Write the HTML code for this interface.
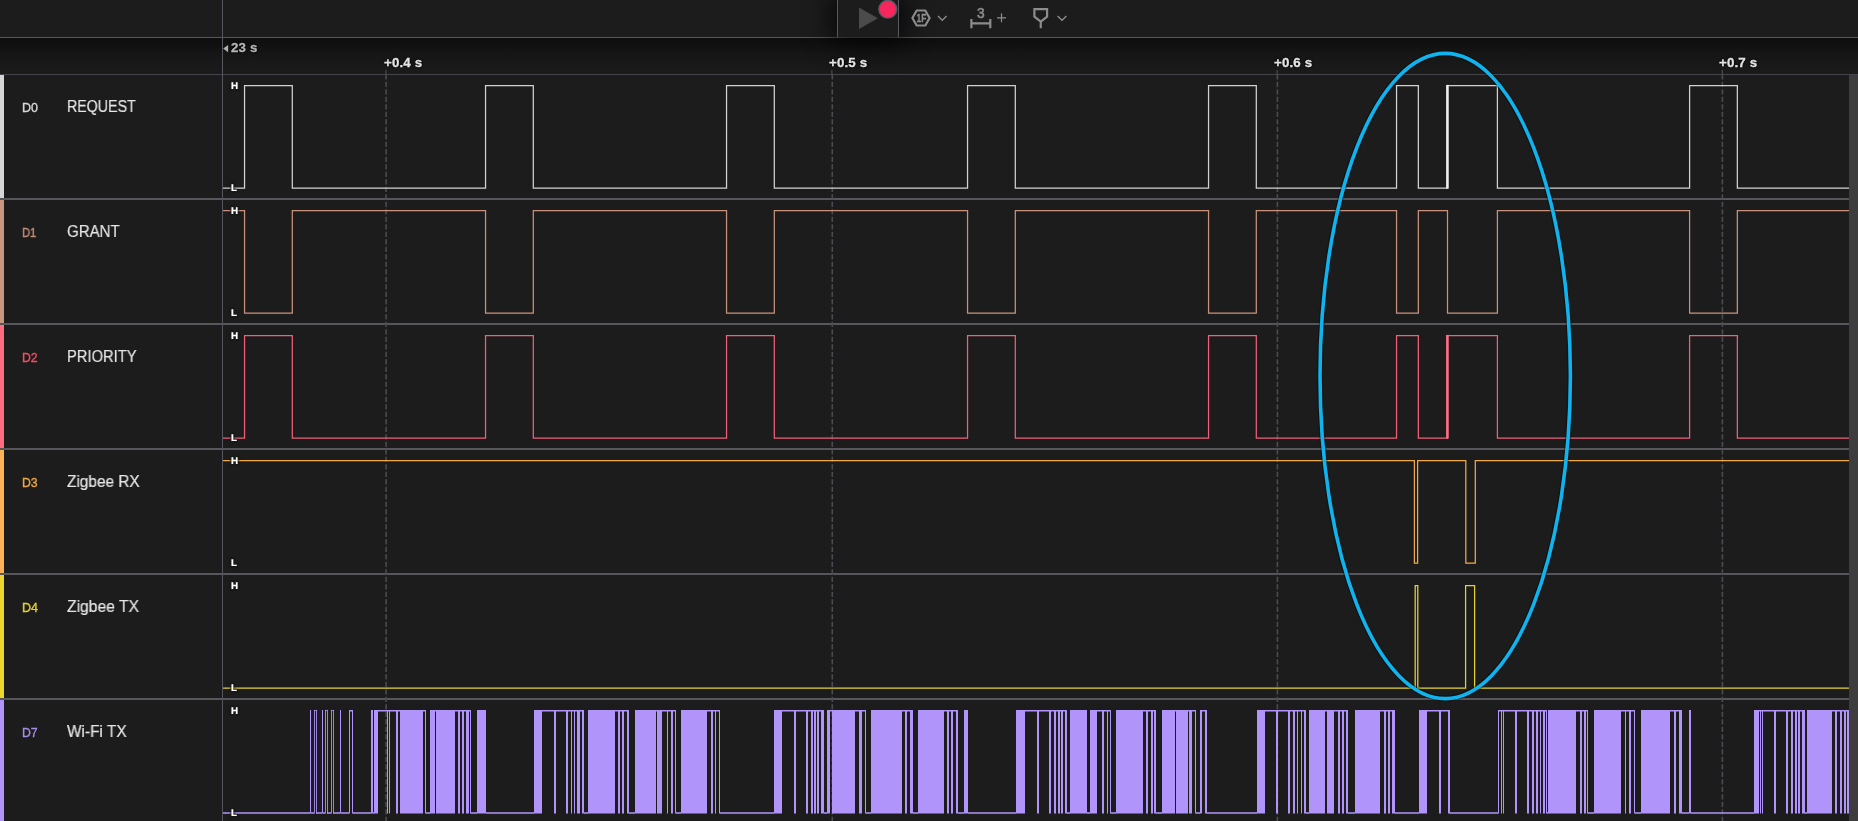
<!DOCTYPE html>
<html lang="en"><head><meta charset="utf-8"><title>Logic capture</title>
<style>
html,body{margin:0;padding:0;background:#1c1c1c;}
body{width:1858px;height:821px;overflow:hidden;position:relative;font-family:"Liberation Sans",sans-serif;}
.abs{position:absolute;}
#topbar{left:0;top:0;width:1858px;height:37px;background:#1c1c1c;border-bottom:1px solid #56565f;}
#ruler{left:0;top:38px;width:1858px;height:36px;background:linear-gradient(#0d0d0d,#161616 45%,#1b1b1b);border-bottom:1px solid #44444c;}
#toolbox{left:837px;top:0;width:60px;height:37px;background:#1c1c1c;border-left:1px solid #58585f;border-right:1px solid #58585f;box-shadow:0 0 26px 6px rgba(0,0,0,.75);}
#vsep{left:222px;top:0;width:1px;height:821px;background:#56565e;}
#scroll{left:1849px;top:75px;width:9px;height:746px;background:#3d3d3d;}
.sep{left:0;width:1849px;height:2px;background:#56565c;}
.bar{left:0;width:4px;}
.chan{left:21.7px;font-size:12.25px;line-height:14px;white-space:nowrap;will-change:transform;transform-origin:0 50%;-webkit-text-stroke:0.35px currentColor;}
.name{left:67px;font-size:16.3px;line-height:20px;color:#e6e6e6;-webkit-text-stroke:0.2px #e6e6e6;will-change:transform;white-space:nowrap;transform-origin:0 50%;}
.hl{will-change:transform;font-weight:bold;font-size:9.8px;line-height:10px;text-rendering:geometricPrecision;color:#fff;left:231px;-webkit-text-stroke:0.2px #fff;text-shadow:0 0 2px #1c1c1c,0 0 2px #1c1c1c,0 0 3px #1c1c1c,0 0 3px #1c1c1c;}
.tick{will-change:transform;font-weight:bold;font-size:13.3px;line-height:14px;color:#e4e4e4;white-space:nowrap;letter-spacing:0.15px;-webkit-text-stroke:0.3px currentColor;text-shadow:0 0 2px #000,0 0 3px #000;}
svg{position:absolute;left:0;top:0;overflow:visible;}
</style></head><body>
<div class="abs" id="topbar"></div>
<div class="abs" id="ruler"></div>
<div class="abs" id="toolbox"></div>

<div class="abs bar" style="top:75px;height:123px;background:#d6d6d6"></div>
<div class="abs sep" style="top:198px"></div>
<div class="abs chan" style="top:101px;color:#d8d8d8;transform:scaleX(1.02)">D0</div>
<div class="abs name" style="top:96px;left:67.4px;transform:scaleX(0.873)">REQUEST</div>
<div class="abs bar" style="top:200px;height:123px;background:#c9967e"></div>
<div class="abs sep" style="top:323px"></div>
<div class="abs chan" style="top:226px;color:#c48e74;transform:scaleX(0.92)">D1</div>
<div class="abs name" style="top:221px;left:67.4px;transform:scaleX(0.925)">GRANT</div>
<div class="abs bar" style="top:325px;height:123px;background:#ff6b7f"></div>
<div class="abs sep" style="top:448px"></div>
<div class="abs chan" style="top:351px;color:#f2505f;transform:scaleX(0.98)">D2</div>
<div class="abs name" style="top:346px;left:67.4px;transform:scaleX(0.905)">PRIORITY</div>
<div class="abs bar" style="top:450px;height:123px;background:#ffb257"></div>
<div class="abs sep" style="top:573px"></div>
<div class="abs chan" style="top:476px;color:#eda646;transform:scaleX(1.0)">D3</div>
<div class="abs name" style="top:471px;left:67px;transform:scaleX(0.945)">Zigbee RX</div>
<div class="abs bar" style="top:575px;height:123px;background:#ecd730"></div>
<div class="abs sep" style="top:698px"></div>
<div class="abs chan" style="top:601px;color:#e4cf2e;transform:scaleX(1.02)">D4</div>
<div class="abs name" style="top:596px;left:67px;transform:scaleX(0.962)">Zigbee TX</div>
<div class="abs bar" style="top:700px;height:121px;background:#b094fa"></div>
<div class="abs chan" style="top:726px;color:#a68be6;transform:scaleX(0.99)">D7</div>
<div class="abs name" style="top:721px;left:67px;transform:scaleX(0.945)">Wi-Fi TX</div>
<div class="abs" id="vsep"></div>
<div class="abs" id="scroll"></div>
<svg width="1858" height="821" viewBox="0 0 1858 821">
<path d="M386 70V75" stroke="#50505a" stroke-width="1.1" fill="none"/>
<path d="M386.1 74.3V821" stroke="#4a4a52" stroke-width="1.6" stroke-dasharray="5.2 2.3" fill="none"/>
<path d="M831.9 70V75" stroke="#50505a" stroke-width="1.1" fill="none"/>
<path d="M832.3 74.3V821" stroke="#4a4a52" stroke-width="1.6" stroke-dasharray="5.2 2.3" fill="none"/>
<path d="M1277.1 70V75" stroke="#50505a" stroke-width="1.1" fill="none"/>
<path d="M1277.4 74.3V821" stroke="#4a4a52" stroke-width="1.6" stroke-dasharray="5.2 2.3" fill="none"/>
<path d="M1722.3 70V75" stroke="#50505a" stroke-width="1.1" fill="none"/>
<path d="M1722.4 74.3V821" stroke="#4a4a52" stroke-width="1.6" stroke-dasharray="5.2 2.3" fill="none"/>
<path d="M223 188H244.55V85.5H292.3V188H485.55V85.5H533.3V188H726.55V85.5H774.3V188H967.55V85.5H1015.3V188H1208.55V85.5H1256.3V188H1396.55V85.5H1418.35V188H1447.5V85.5H1497.4V188H1689.6V85.5H1737.35V188H1849" fill="none" stroke="#d2d2d2" stroke-width="1.25" stroke-linejoin="miter"/>
<path d="M223 210.5H244.55V313H292.3V210.5H485.55V313H533.3V210.5H726.55V313H774.3V210.5H967.55V313H1015.3V210.5H1208.55V313H1256.3V210.5H1396.55V313H1418.35V210.5H1447.5V313H1497.4V210.5H1689.6V313H1737.35V210.5H1849" fill="none" stroke="#c9927a" stroke-width="1.25" stroke-linejoin="miter"/>
<path d="M223 438H244.55V335.5H292.3V438H485.55V335.5H533.3V438H726.55V335.5H774.3V438H967.55V335.5H1015.3V438H1208.55V335.5H1256.3V438H1396.55V335.5H1418.35V438H1447.5V335.5H1497.4V438H1689.6V335.5H1737.35V438H1849" fill="none" stroke="#f0607a" stroke-width="1.25" stroke-linejoin="miter"/>
<path d="M223 460.5H1414.4V563H1417.6V460.5H1465.8V563H1475.3V460.5H1849" fill="none" stroke="#f0a848" stroke-width="1.25" stroke-linejoin="miter"/>
<path d="M223 688H1415.2V585.5H1417.8V688H1465.6V585.5H1474.6V688H1849" fill="none" stroke="#e6d232" stroke-width="1.25" stroke-linejoin="miter"/>
<path d="M1447.4 84.9V188.6" stroke="#ededed" stroke-width="2.6" fill="none"/>
<path d="M1447.4 334.9V438.6" stroke="#ff6f86" stroke-width="2.6" fill="none"/>
<path d="M310 709.9H311V813.6H310ZM322 709.9H323V813.6H322ZM340 709.9H341V813.6H340ZM349 709.9H350V813.6H349ZM352 709.9H353V813.6H352ZM371 709.9H373V813.6H371ZM374 709.9H378V813.6H374ZM387 709.9H388V813.6H387ZM389 709.9H390V813.6H389ZM396 709.9H398V813.6H396ZM400 709.9H423V813.6H400ZM425 709.9H426V813.6H425ZM430 709.9H435V813.6H430ZM436 709.9H455V813.6H436ZM458 709.9H460V813.6H458ZM462 709.9H464V813.6H462ZM466 709.9H469V813.6H466ZM470 709.9H471V813.6H470ZM477 709.9H486V813.6H477ZM534 709.9H542V813.6H534ZM554 709.9H556V813.6H554ZM566 709.9H568V813.6H566ZM571 709.9H572V813.6H571ZM574 709.9H575V813.6H574ZM577 709.9H580V813.6H577ZM582 709.9H584V813.6H582ZM588 709.9H615V813.6H588ZM618 709.9H620V813.6H618ZM622 709.9H624V813.6H622ZM627 709.9H629V813.6H627ZM635 709.9H656V813.6H635ZM657 709.9H662V813.6H657ZM667 709.9H668V813.6H667ZM671 709.9H673V813.6H671ZM675 709.9H676V813.6H675ZM681 709.9H707V813.6H681ZM711 709.9H713V813.6H711ZM715 709.9H716V813.6H715ZM719 709.9H720V813.6H719ZM774 709.9H782V813.6H774ZM794 709.9H796V813.6H794ZM806 709.9H808V813.6H806ZM811 709.9H813V813.6H811ZM814 709.9H816V813.6H814ZM817 709.9H819V813.6H817ZM821 709.9H824V813.6H821ZM827 709.9H830V813.6H827ZM832 709.9H855V813.6H832ZM859 709.9H862V813.6H859ZM865 709.9H866V813.6H865ZM871 709.9H902V813.6H871ZM905 709.9H907V813.6H905ZM910 709.9H913V813.6H910ZM918 709.9H944V813.6H918ZM947 709.9H949V813.6H947ZM951 709.9H953V813.6H951ZM956 709.9H958V813.6H956ZM964 709.9H968V813.6H964ZM1016 709.9H1025V813.6H1016ZM1037 709.9H1039V813.6H1037ZM1049 709.9H1051V813.6H1049ZM1054 709.9H1056V813.6H1054ZM1058 709.9H1060V813.6H1058ZM1061 709.9H1063V813.6H1061ZM1065 709.9H1067V813.6H1065ZM1070 709.9H1087V813.6H1070ZM1090 709.9H1097V813.6H1090ZM1102 709.9H1104V813.6H1102ZM1107 709.9H1108V813.6H1107ZM1110 709.9H1111V813.6H1110ZM1116 709.9H1143V813.6H1116ZM1146 709.9H1148V813.6H1146ZM1151 709.9H1153V813.6H1151ZM1154 709.9H1156V813.6H1154ZM1162 709.9H1175V813.6H1162ZM1176 709.9H1188V813.6H1176ZM1189 709.9H1192V813.6H1189ZM1195 709.9H1196V813.6H1195ZM1200 709.9H1202V813.6H1200ZM1205 709.9H1207V813.6H1205ZM1257 709.9H1265V813.6H1257ZM1276 709.9H1278V813.6H1276ZM1288 709.9H1290V813.6H1288ZM1293 709.9H1295V813.6H1293ZM1297 709.9H1298V813.6H1297ZM1301 709.9H1302V813.6H1301ZM1304 709.9H1306V813.6H1304ZM1309 709.9H1325V813.6H1309ZM1327 709.9H1334V813.6H1327ZM1338 709.9H1340V813.6H1338ZM1342 709.9H1344V813.6H1342ZM1346 709.9H1348V813.6H1346ZM1355 709.9H1380V813.6H1355ZM1384 709.9H1386V813.6H1384ZM1388 709.9H1390V813.6H1388ZM1392 709.9H1395V813.6H1392ZM1419 709.9H1427V813.6H1419ZM1439 709.9H1441V813.6H1439ZM1448 709.9H1450V813.6H1448ZM1498 709.9H1499V813.6H1498ZM1501 709.9H1502V813.6H1501ZM1503 709.9H1504V813.6H1503ZM1515 709.9H1517V813.6H1515ZM1527 709.9H1529V813.6H1527ZM1532 709.9H1534V813.6H1532ZM1536 709.9H1538V813.6H1536ZM1540 709.9H1541V813.6H1540ZM1543 709.9H1545V813.6H1543ZM1546 709.9H1547V813.6H1546ZM1548 709.9H1576V813.6H1548ZM1580 709.9H1582V813.6H1580ZM1584 709.9H1586V813.6H1584ZM1587 709.9H1588V813.6H1587ZM1594 709.9H1621V813.6H1594ZM1625 709.9H1626V813.6H1625ZM1629 709.9H1631V813.6H1629ZM1634 709.9H1635V813.6H1634ZM1641 709.9H1670V813.6H1641ZM1674 709.9H1676V813.6H1674ZM1679 709.9H1682V813.6H1679ZM1689 709.9H1691V813.6H1689ZM1754 709.9H1759V813.6H1754ZM1760 709.9H1761V813.6H1760ZM1762 709.9H1763V813.6H1762ZM1774 709.9H1776V813.6H1774ZM1786 709.9H1788V813.6H1786ZM1791 709.9H1793V813.6H1791ZM1795 709.9H1797V813.6H1795ZM1798 709.9H1800V813.6H1798ZM1802 709.9H1805V813.6H1802ZM1807 709.9H1832V813.6H1807ZM1835 709.9H1837V813.6H1835ZM1840 709.9H1842V813.6H1840ZM1844 709.9H1846V813.6H1844ZM1847 709.9H1849V813.6H1847Z" fill="#b094fa"/><path d="M223 813H310M311 813H314M316 813H322M323 813H325M327 813H331M333 813H340M341 813H349M350 710.8H352M353 813H371M373 813H374M378 710.8H387M388 710.8H389M390 710.8H396M398 710.8H400M423 710.8H425M426 813H430M435 710.8H436M455 710.8H458M460 710.8H462M464 710.8H466M469 710.8H470M471 813H477M486 813H534M542 710.8H554M556 710.8H566M568 710.8H571M572 710.8H574M575 710.8H577M580 710.8H582M584 813H588M615 710.8H618M620 710.8H622M624 710.8H627M629 813H635M656 710.8H657M662 710.8H667M668 710.8H671M673 710.8H675M676 813H681M707 710.8H711M713 710.8H715M716 710.8H719M720 813H774M782 710.8H794M796 710.8H806M808 710.8H811M813 710.8H814M816 710.8H817M819 710.8H821M824 813H827M830 710.8H832M855 710.8H859M862 710.8H865M866 813H871M902 710.8H905M907 710.8H910M913 813H918M944 710.8H947M949 710.8H951M953 710.8H956M958 813H964M968 813H1016M1025 710.8H1037M1039 710.8H1049M1051 710.8H1054M1056 710.8H1058M1060 710.8H1061M1063 710.8H1065M1067 813H1070M1087 813H1090M1097 710.8H1102M1104 710.8H1107M1108 710.8H1110M1111 813H1116M1143 710.8H1146M1148 710.8H1151M1153 710.8H1154M1156 813H1162M1175 710.8H1176M1188 710.8H1189M1192 710.8H1195M1196 813H1200M1202 710.8H1205M1207 813H1257M1265 710.8H1276M1278 710.8H1288M1290 710.8H1293M1295 710.8H1297M1298 710.8H1301M1302 710.8H1304M1306 813H1309M1325 710.8H1327M1334 710.8H1338M1340 710.8H1342M1344 710.8H1346M1348 813H1355M1380 710.8H1384M1386 710.8H1388M1390 710.8H1392M1395 813H1419M1427 710.8H1439M1441 710.8H1448M1450 813H1498M1499 710.8H1501M1502 710.8H1503M1504 710.8H1515M1517 710.8H1527M1529 710.8H1532M1534 710.8H1536M1538 710.8H1540M1541 710.8H1543M1545 710.8H1546M1547 813H1548M1576 710.8H1580M1582 710.8H1584M1586 710.8H1587M1588 813H1594M1621 710.8H1625M1626 710.8H1629M1631 710.8H1634M1635 813H1641M1670 710.8H1674M1676 710.8H1679M1682 813H1689M1691 813H1754M1759 710.8H1760M1761 710.8H1762M1763 710.8H1774M1776 710.8H1786M1788 710.8H1791M1793 710.8H1795M1797 710.8H1798M1800 710.8H1802M1805 813H1807M1832 710.8H1835M1837 710.8H1840M1842 710.8H1844M1846 710.8H1847" fill="none" stroke="#b094fa" stroke-width="1.4"/><path d="M314.5 709.9V813.6M316.5 709.9V813.6M314.5 710.5H316.5M325.5 709.9V813.6M327.5 709.9V813.6M325.5 710.5H327.5M331.5 709.9V813.6M333.5 709.9V813.6M331.5 710.5H333.5" fill="none" stroke="#b094fa" stroke-width="1" stroke-opacity="0.85"/>
<ellipse cx="1445.2" cy="376" rx="125.2" ry="322.6" fill="none" stroke="rgba(0,0,0,.35)" stroke-width="6"/>
<ellipse cx="1445.2" cy="376" rx="125.2" ry="322.6" fill="none" stroke="#0fb4ef" stroke-width="3.6"/>
<path d="M859 7.5L877.8 18.3L859 29Z" fill="#4b4b4b"/>
<circle cx="887.8" cy="9.2" r="8.9" fill="#f8265f" stroke="#5a5a64" stroke-width="1.4"/>
<path d="M912.4 18L916.7 10.5H925.3L929.6 18L925.3 25.5H916.7Z" fill="none" stroke="#8c8c8c" stroke-width="2.2" stroke-linejoin="round"/>
<text transform="translate(921.4 21.6) scale(0.8 1)" font-family="Liberation Sans, sans-serif" font-size="10.4" font-weight="bold" fill="#8c8c8c" stroke="#8c8c8c" stroke-width="0.3" text-anchor="middle">1F</text>
<path d="M938 16L942.3 20.3L946.6 16" fill="none" stroke="#8c8c8c" stroke-width="1.3"/>
<path d="M971.4 19V28.2M990.3 19V28.2M971.4 23.3H990.3" fill="none" stroke="#8c8c8c" stroke-width="2.2"/>
<text x="980.9" y="18.2" font-family="Liberation Sans, sans-serif" font-size="13.8" fill="#8c8c8c" stroke="#8c8c8c" stroke-width="0.55" text-anchor="middle">3</text>
<path d="M997 17.8H1006M1001.5 13.3V22.3" fill="none" stroke="#8c8c8c" stroke-width="1.2"/>
<path d="M1034.4 9.1H1047.1V16.6L1040.75 21.6L1034.4 16.6ZM1040.75 21.6V28.3" fill="none" stroke="#8c8c8c" stroke-width="2.2" stroke-linejoin="miter"/>
<path d="M1057.6 16L1062 20.3L1066.4 16" fill="none" stroke="#8c8c8c" stroke-width="1.3"/>
<path d="M223.2 48.6L228.1 45V52.2Z" fill="#b0b0b0"/>
</svg>
<div class="abs hl" style="top:82px">H</div>
<div class="abs hl" style="top:184px">L</div>
<div class="abs hl" style="top:207px">H</div>
<div class="abs hl" style="top:309px">L</div>
<div class="abs hl" style="top:332px">H</div>
<div class="abs hl" style="top:434px">L</div>
<div class="abs hl" style="top:457px">H</div>
<div class="abs hl" style="top:559px">L</div>
<div class="abs hl" style="top:582px">H</div>
<div class="abs hl" style="top:684px">L</div>
<div class="abs hl" style="top:707px">H</div>
<div class="abs hl" style="top:809px">L</div>
<div class="abs tick" style="left:230.5px;top:40.9px;color:#b6b6b6">23 s</div>
<div class="abs tick" style="left:383.5px;top:56.4px">+0.4 s</div>
<div class="abs tick" style="left:828.9px;top:56.4px">+0.5 s</div>
<div class="abs tick" style="left:1274.2px;top:56.4px">+0.6 s</div>
<div class="abs tick" style="left:1719.3px;top:56.4px">+0.7 s</div>
</body></html>
